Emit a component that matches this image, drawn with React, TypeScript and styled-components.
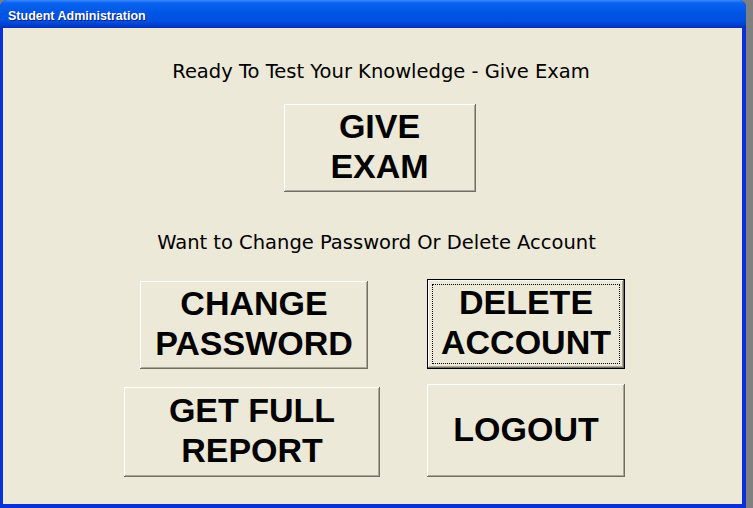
import styled, { createGlobalStyle } from 'styled-components'

const GlobalStyle = createGlobalStyle`
  html, body {
    margin: 0;
    padding: 0;
    background: #808080;
  }
  #root {
    width: 753px;
    height: 508px;
    overflow: hidden;
  }
`

const Window = styled.div`
  width: 746px;
  height: 508px;
  display: flex;
  flex-direction: column;
  border-radius: 7px 7px 0 0;
  overflow: hidden;
  background: #0831d9;
`

const TitleBar = styled.div`
  height: 28px;
  flex: none;
  display: flex;
  align-items: center;
  padding: 3px 8px 0;
  box-sizing: border-box;
  background: linear-gradient(
    to bottom,
    #3d8bff 0%,
    #0a64f0 10%,
    #0055e5 45%,
    #0050e0 75%,
    #003ecc 90%,
    #0a2dba 100%
  );
`

const Title = styled.span`
  font-family: 'Liberation Sans', 'DejaVu Sans', sans-serif;
  font-weight: bold;
  font-size: 12.5px;
  color: #fff;
  text-shadow: 1px 1px 0 #0a1e7a;
`

const Content = styled.div`
  flex: 1;
  margin: 0 4px 4px 3px;
  background: #ece9d8;
  display: flex;
  flex-direction: column;
  align-items: center;
  padding: 31px 0 0 14px;
  box-sizing: border-box;
`

const Label = styled.div<{ $gap: number; $shift?: number }>`
  margin-top: ${p => p.$gap}px;
  margin-left: ${p => p.$shift ?? 0}px;
  font-family: 'Comic Sans MS', 'DejaVu Sans', sans-serif;
  font-size: 19.5px;
  line-height: 26px;
  color: #000;
`

const Grid = styled.div`
  align-self: stretch;
  display: grid;
  grid-template-columns: 256px 198px;
  grid-template-rows: 90px 93px;
  column-gap: 47px;
  row-gap: 15px;
  padding-left: 107px;
  margin-top: 23px;
  justify-items: center;
  align-items: end;
`

const Button = styled.button<{ $w: number; $h: number; $gap?: number; $shift?: number; $focused?: boolean }>`
  position: relative;
  width: ${p => p.$w}px;
  height: ${p => p.$h}px;
  margin-top: ${p => p.$gap ?? 0}px;
  margin-left: ${p => p.$shift ?? 0}px;
  padding: 0 0 4px;
  background: #ece9d8;
  border: ${p => (p.$focused ? '1px solid #000' : 'none')};
  box-sizing: border-box;
  box-shadow: inset -1px -1px #716f64, inset 1px 1px #fff, inset -2px -2px #aca899;
  font-family: 'Liberation Sans', Arial, sans-serif;
  font-weight: bold;
  font-size: 34px;
  line-height: 40px;
  color: #000;
  text-align: center;
  cursor: pointer;
  outline: none;
`

const FocusRing = styled.span`
  position: absolute;
  inset: 4px;
  border: 1px dotted #000;
  pointer-events: none;
`

export default function App(): JSX.Element {
  return (
    <>
      <GlobalStyle />
      <Window>
        <TitleBar>
          <Title>Student Administration</Title>
        </TitleBar>
        <Content>
          <Label $gap={0} $shift={3}>Ready To Test Your Knowledge - Give Exam</Label>
          <Button $w={192} $h={88} $gap={19}>
            GIVE<br />EXAM
          </Button>
          <Label $gap={38} $shift={-6}>Want to Change Password Or Delete Account</Label>
          <Grid>
            <Button $w={228} $h={88} $shift={4}>
              CHANGE<br />PASSWORD
            </Button>
            <Button $w={198} $h={90} $focused>
              <FocusRing />
              DELETE<br />ACCOUNT
            </Button>
            <Button $w={256} $h={90}>
              GET FULL<br />REPORT
            </Button>
            <Button $w={198} $h={93}>
              LOGOUT
            </Button>
          </Grid>
        </Content>
      </Window>
    </>
  )
}
